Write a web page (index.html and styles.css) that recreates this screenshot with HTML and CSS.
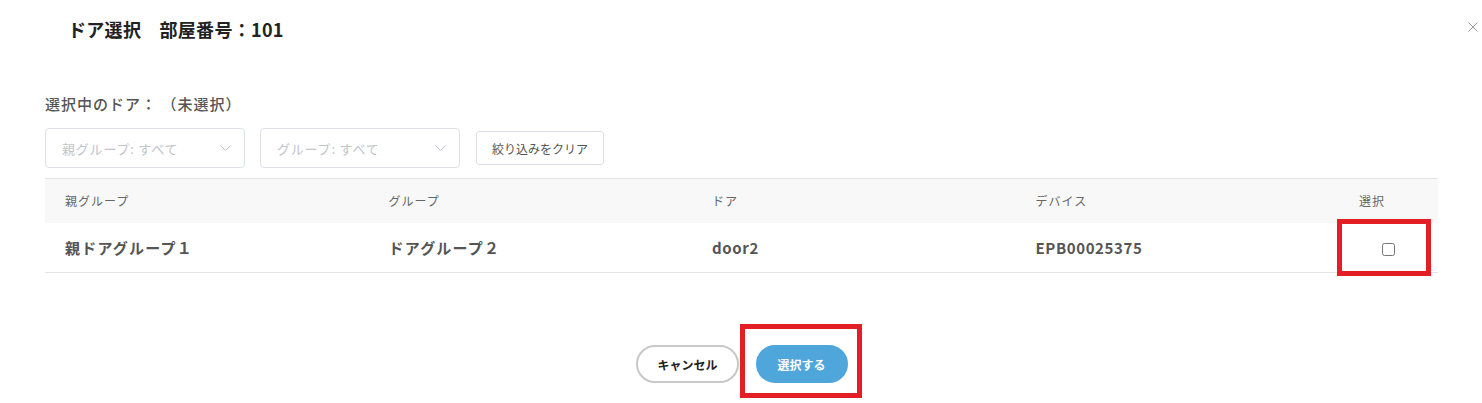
FILE: index.html
```html
<!DOCTYPE html>
<html lang="ja">
<head>
  <meta charset="UTF-8">
  <title>ドア選択</title>
  <link rel="stylesheet" href="styles.css">
</head>
<body>
  <div class="dialog">
    <header class="dialog-header">
      <h1 class="dialog-title">ドア選択　部屋番号：101</h1>
      <button class="close" aria-label="閉じる">
        <svg width="10" height="10" viewBox="0 0 10 10"><path d="M0.5 0.5 L9.5 9.5 M9.5 0.5 L0.5 9.5" stroke="#9a9a9a" stroke-width="1" fill="none"/></svg>
      </button>
    </header>

    <div class="dialog-body">
      <p class="selected-label">選択中のドア： （未選択）</p>

      <div class="filters">
        <div class="select">
          <span class="placeholder">親グループ: すべて</span>
          <svg class="chevron" width="11" height="6" viewBox="0 0 11 6"><path d="M0.5 0.5 L5.5 5.5 L10.5 0.5" stroke="#c0c4cc" stroke-width="1" fill="none"/></svg>
        </div>
        <div class="select">
          <span class="placeholder">グループ: すべて</span>
          <svg class="chevron" width="11" height="6" viewBox="0 0 11 6"><path d="M0.5 0.5 L5.5 5.5 L10.5 0.5" stroke="#c0c4cc" stroke-width="1" fill="none"/></svg>
        </div>
        <button class="btn-clear">絞り込みをクリア</button>
      </div>

      <table class="door-table">
        <colgroup>
          <col class="col-wide">
          <col class="col-wide">
          <col class="col-wide">
          <col class="col-wide">
          <col class="col-check">
        </colgroup>
        <thead>
          <tr>
            <th>親グループ</th>
            <th>グループ</th>
            <th>ドア</th>
            <th>デバイス</th>
            <th>選択</th>
          </tr>
        </thead>
        <tbody>
          <tr>
            <td>親ドアグループ１</td>
            <td>ドアグループ２</td>
            <td class="latin">door2</td>
            <td class="latin">EPB00025375</td>
            <td class="check-cell">
              <input type="checkbox">
              <span class="mark mark-check"></span>
            </td>
          </tr>
        </tbody>
      </table>
    </div>

    <footer class="dialog-footer">
      <button class="btn btn-cancel">キャンセル</button>
      <span class="btn-wrap">
        <button class="btn btn-primary">選択する</button>
        <span class="mark mark-submit"></span>
      </span>
    </footer>
  </div>
</body>
</html>
```

FILE: styles.css
```css
* {
  box-sizing: border-box;
}

html,
body{
  margin: 0;
  background: white;
  font-family: "Noto Sans CJK JP", "Noto Sans", sans-serif;
  color: #333;
}

.dialog{
  position: relative;
  width: 1482px;
  height: 403px;
}

.dialog-header{
  height: 58px;
  padding: 0 68px;
  display: flex;
  align-items: center;
}

.dialog-title{
  margin: 0;
  font-size: 18px;
  font-weight: 700;
  letter-spacing: 0.3px;
  color: #222;
  line-height: 24px;
}

.close{
  position: absolute;
  top: 22px;
  right: 4px;
  padding: 0;
  border: 0;
  background: none;
  width: 10px;
  height: 10px;
  line-height: 0;
}

.dialog-body{
  padding: 36px 44px 0 45px;
}

.selected-label{
  margin: 0;
  font-size: 15px;
  font-weight: 500;
  letter-spacing: 1px;
  line-height: 20px;
  color: #555;
}

.filters{
  margin-top: 14px;
  display: flex;
  align-items: center;
  gap: 15px;
  height: 40px;
}

.select{
  width: 200px;
  height: 40px;
  border: 1px solid #dcdfe6;
  border-radius: 4px;
  padding: 0 13px 0 16px;
  display: flex;
  align-items: center;
  justify-content: space-between;
}

.placeholder{
  font-size: 13px;
  color: #c0c4cc;
  letter-spacing: 0.8px;
}

.chevron{
  display: block;
}

.btn-clear{
  margin-left: 1px;
  height: 34px;
  padding: 0 15px;
  border: 1px solid #dcdfe6;
  border-radius: 3px;
  background: white;
  font-family: inherit;
  font-size: 12px;
  color: #555;
}

.door-table{
  margin-top: 10px;
  width: 100%;
  table-layout: fixed;
  border-collapse: collapse;
}

.col-wide{
  width: 323.5px;
}

.col-check{
  width: 99px;
}

.door-table th{
  height: 44px;
  padding: 0 20px;
  background: #f8f8f8;
  border-top: 1px solid #e4e4e4;
  text-align: left;
  font-size: 12px;
  font-weight: 400;
  letter-spacing: 1px;
  color: #666;
}

.door-table td{
  height: 50px;
  padding: 0 20px;
  border-bottom: 1px solid #e4e4e4;
  font-size: 15px;
  font-weight: 700;
  letter-spacing: 1.2px;
  color: #555;
}

.door-table td.latin{
  letter-spacing: 0.6px;
}

.door-table td.check-cell{
  position: relative;
  padding: 0;
  text-align: center;
}

.check-cell input{
  margin: 0;
  width: 13px;
  height: 13px;
  vertical-align: middle;
}

.mark{
  position: absolute;
  border: 5px solid #e41e25;
}

.mark-check{
  top: -4px;
  left: -2px;
  width: 94px;
  height: 57px;
}

.dialog-footer{
  margin-top: 72px;
  display: flex;
  justify-content: center;
  gap: 17px;
  padding-left: 2px;
}

.btn{
  height: 38px;
  border-radius: 19px;
  border: 2px solid #c8c8c8;
  background: white;
  font-family: inherit;
  font-size: 12px;
  font-weight: 700;
  color: #222;
  padding: 0 19px;
}

.btn-primary{
  background: #4fa6db;
  border-color: #4fa6db;
  color: white;
  padding: 0 20px;
}

.btn-wrap{
  position: relative;
  display: inline-block;
}

.mark-submit{
  top: -21px;
  left: -16px;
  right: -14px;
  bottom: -15px;
}
```
